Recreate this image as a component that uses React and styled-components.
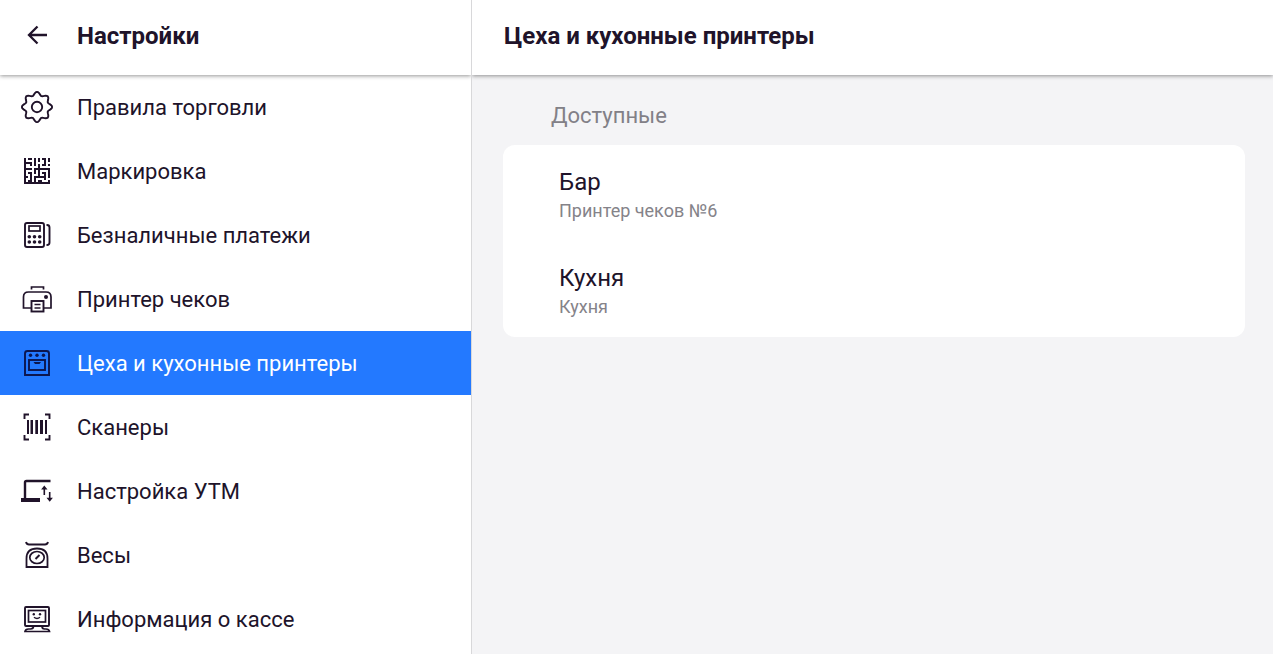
import React from "react";
import styled, { createGlobalStyle } from "styled-components";

const INK = "#20132a";

const GlobalStyle = createGlobalStyle`
  *, *::before, *::after { box-sizing: border-box; }
  body {
    margin: 0;
    background: #f4f4f6;
    color: ${INK};
    font-family: Roboto, "Liberation Sans", sans-serif;
  }
`;

const Page = styled.div`
  display: grid;
  grid-template-columns: 37% 1fr;
  min-height: 100vh;
`;

const Sidebar = styled.aside`
  display: flex;
  flex-direction: column;
  overflow: clip;
  background: #fff;
`;

const Main = styled.main`
  display: flex;
  flex-direction: column;
  overflow: clip;
  border-left: 1px solid #d8d8da;
`;

const Header = styled.header`
  display: flex;
  align-items: center;
  flex: none;
  height: 75px;
  padding: 0 28px 4px ${(p) => p.$inset}px;
  background: #fff;
  box-shadow: 0 1px 4px rgba(0, 0, 0, 0.42);
`;

const Title = styled.h1`
  margin: 0;
  font-size: 24px;
  line-height: 32px;
  font-weight: 700;
`;

const BackButton = styled.button`
  display: flex;
  width: 32px;
  height: 32px;
  margin-right: 24px;
  padding: 0;
  border: 0;
  background: none;
  color: inherit;
  cursor: pointer;
`;

const Menu = styled.nav`
  display: flex;
  flex-direction: column;
`;

const MenuLink = styled.a`
  display: flex;
  align-items: center;
  gap: 24px;
  height: 64px;
  padding: 0 21px;
  background: ${(p) => (p.$active ? "#2379ff" : "transparent")};
  color: ${(p) => (p.$active ? "#fff" : INK)};
  font-size: 22px;
  line-height: 28px;
  white-space: nowrap;
  text-decoration: none;

  svg { color: ${(p) => (p.$active ? "#0c1650" : INK)}; }
`;

const MenuLabel = styled.span`
  padding-top: 2px;
`;

const Icon = styled.svg.attrs({ viewBox: "0 0 32 32", "aria-hidden": true })`
  flex: none;
  width: 32px;
  height: 32px;
  fill: none;
  stroke: currentColor;
  stroke-width: 1.9;

  .solid { fill: currentColor; stroke: none; }
`;

const Content = styled.section`
  padding: 25px 28px 24px 31px;
`;

const GroupTitle = styled.h2`
  margin: 0 0 13px;
  padding-left: 48px;
  color: #828087;
  font-size: 22px;
  line-height: 32px;
  font-weight: 400;
`;

const Card = styled.ul`
  margin: 0;
  padding: 0;
  border-radius: 12px;
  background: #fff;
  list-style: none;
`;

const CardRow = styled.li`
  display: flex;
  flex-direction: column;
  justify-content: center;
  height: 96px;
  padding: 4px 56px 0;
`;

const RowName = styled.span`
  font-size: 24px;
  line-height: 32px;
`;

const RowPrinter = styled.span`
  color: #858389;
  font-size: 18px;
  line-height: 26px;
`;

const gearPath =
  Array.from({ length: 96 }, (_, i) => {
    const a = (i / 96) * Math.PI * 2;
    const r = 13.4 + 1.7 * Math.cos(8 * a);
    return `${i ? "L" : "M"}${(16 + r * Math.cos(a)).toFixed(2)} ${(16 + r * Math.sin(a)).toFixed(2)}`;
  }).join("") + "Z";

const matrix = [
  "X.XX.X.X.XX.X",
  "X....X.X..X.X",
  "XXXX.X....X..",
  "X..X.X.X.XX.X",
  "X......X.....",
  "XXXX.XXXXXXXX",
  "X....X.X....X",
  "X.XX.X.X.XX.X",
  "X..X...X..X.X",
  "XX.X.XXXXXX.X",
  "X..X.X....X..",
  "X.XX.X.XX...X",
  "XXXXXXXXXXXXX",
];

const matrixPath = matrix
  .flatMap((row, y) =>
    [...row].map((c, x) => (c === "X" ? `M${3 + x * 2} ${3 + y * 2}h2v2h-2z` : ""))
  )
  .join("");

const icons = {
  gear: (
    <>
      <path d={gearPath} />
      <circle cx="16" cy="16" r="5.2" />
    </>
  ),
  matrix: <path className="solid" shapeRendering="crispEdges" d={matrixPath} />,
  terminal: (
    <>
      <rect x="4" y="4" width="19" height="24" rx="2" />
      <rect x="8" y="7" width="11" height="5" strokeWidth="1.7" />
      <g className="solid">
        {[17.7, 23].map((y) =>
          [8.3, 13.5, 18.7].map((x) => <circle key={`${x}-${y}`} cx={x} cy={y} r="1.8" />)
        )}
      </g>
      <path d="M25.5 6h.5q2.5 0 2.5 2.5v15q0 2.5-2.5 2.5h-.5" />
    </>
  ),
  printer: (
    <>
      <path d="M10.5 6.5V4h12v2.5" strokeWidth="1.7" />
      <path d="M10 25H2.5V14q0-5 5-5H25q5 0 5 5v11h-7" strokeWidth="1.7" />
      <rect x="10.5" y="18" width="12" height="10.5" />
      <path d="M13.5 21.5h6M13.5 25h6" strokeWidth="1.6" />
      <circle className="solid" cx="25" cy="14" r="2" />
    </>
  ),
  oven: (
    <>
      <path d="M4 28V6.5Q4 4 6.500 4h19Q28 4 28 6.5V28Z" />
      <g className="solid">
        <circle cx="9.5" cy="8.2" r="1.7" />
        <circle cx="16" cy="8.2" r="1.7" />
        <circle cx="22.5" cy="8.2" r="1.7" />
        <path d="M12.500 15H20l-1.500 2H14z" />
      </g>
      <rect x="8" y="13" width="16" height="10" />
    </>
  ),
  scanner: (
    <>
      <path d="M3.500 8V3.500H8M24 3.500h4.500V8M28.500 24v4.500H24M8 28.500H3.500V24" />
      <path
        className="solid"
        d="M6 9h2v14H6zM9.500 9h2.500v14H9.500zM14.300 9H17v14h-2.700zM19 9h3v14h-3zM24 9h2v14h-2z"
      />
    </>
  ),
  utm: (
    <>
      <path d="M4 23V7.500Q4 6 5.500 6H29.500" strokeWidth="2.400" />
      <path className="solid" d="M0 23h19v4H0z" />
      <path strokeWidth="1.6" d="M23.300 20v-7M28.700 17v7" />
      <path className="solid" d="M23.300 10.500l3.200 4h-6.400zM28.700 26.700l-3.200-4h6.400z" />
    </>
  ),
  scales: (
    <>
      <path d="M5 3q.7 2.500 3 2.500h16q2.300 0 3-2.500" />
      <path d="M5.500 28V19.500Q5.500 9.500 16 9.500t10.500 10V28Z" strokeWidth="1.8" />
      <ellipse cx="16" cy="18.500" rx="7.200" ry="6" strokeWidth="1.7" />
      <path d="M14.500 20l4-4" />
    </>
  ),
  computer: (
    <>
      <rect x="4" y="4" width="24" height="19" rx="1" />
      <rect x="7.500" y="7.500" width="17" height="11.500" strokeWidth="1.7" />
      <g className="solid">
        <circle cx="12.800" cy="11.300" r="1.2" />
        <circle cx="19" cy="11.300" r="1.2" />
      </g>
      <path strokeWidth="1.4" d="M13 14.300q3 2.600 6 0" />
      <path
        strokeWidth="1.7"
        d="M12.500 23q0 3-3 3H7.500Q4.500 26 4 28.500h24.500Q28 26 25 26h-1.500q-2.500 0-2.500-3"
      />
    </>
  ),
};

const menu = [
  ["gear", "Правила торговли"],
  ["matrix", "Маркировка"],
  ["terminal", "Безналичные платежи"],
  ["printer", "Принтер чеков"],
  ["oven", "Цеха и кухонные принтеры"],
  ["scanner", "Сканеры"],
  ["utm", "Настройка УТМ"],
  ["scales", "Весы"],
  ["computer", "Информация о кассе"],
];

const workshops = [
  ["Бар", "Принтер чеков №6"],
  ["Кухня", "Кухня"],
];

export default function App() {
  return (
    <>
      <GlobalStyle />
      <Page>
        <Sidebar>
          <Header $inset={21}>
            <BackButton type="button" aria-label="Назад">
              <Icon>
                <path strokeWidth="2.3" d="M26 15H8M16.500 6.500L8 15l8.500 8.500" />
              </Icon>
            </BackButton>
            <Title>Настройки</Title>
          </Header>
          <Menu>
            {menu.map(([icon, label]) => (
              <MenuLink
                key={icon}
                href={`#${icon}`}
                $active={icon === "oven"}
                aria-current={icon === "oven" ? "page" : undefined}
              >
                <Icon>{icons[icon]}</Icon>
                <MenuLabel>{label}</MenuLabel>
              </MenuLink>
            ))}
          </Menu>
        </Sidebar>
        <Main>
          <Header $inset={32}>
            <Title as="h2">Цеха и кухонные принтеры</Title>
          </Header>
          <Content>
            <GroupTitle as="h3">Доступные</GroupTitle>
            <Card>
              {workshops.map(([name, printer]) => (
                <CardRow key={name}>
                  <RowName>{name}</RowName>
                  <RowPrinter>{printer}</RowPrinter>
                </CardRow>
              ))}
            </Card>
          </Content>
        </Main>
      </Page>
    </>
  );
}
